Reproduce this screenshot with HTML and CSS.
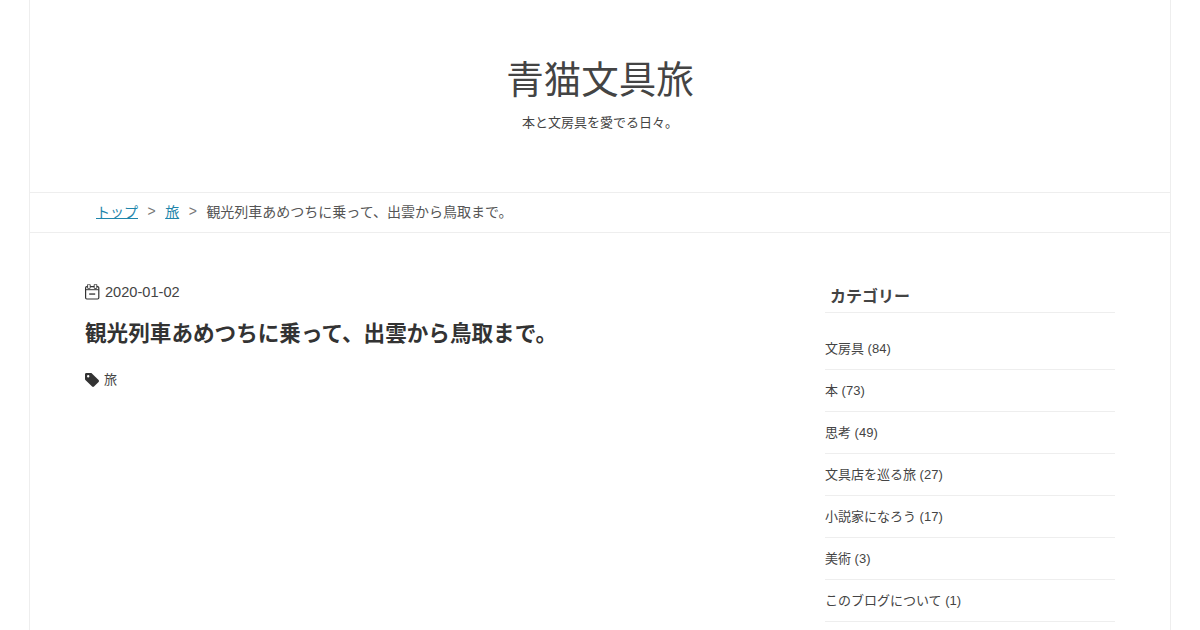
FILE: index.html
```html
<!DOCTYPE html>
<html lang="ja">
<head>
<meta charset="utf-8">
<title>青猫文具旅</title>
<link rel="stylesheet" href="styles.css">
</head>
<body>
<div class="site">
  <header class="site-header">
    <h1 class="site-title">青猫文具旅</h1>
    <p class="site-desc">本と文房具を愛でる日々。</p>
  </header>
  <nav class="crumbs">
    <a href="#">トップ</a><span class="sep">&gt;</span><a href="#">旅</a><span class="sep">&gt;</span><span>観光列車あめつちに乗って、出雲から鳥取まで。</span>
  </nav>
  <div class="content">
    <main class="main">
      <div class="date">
        <svg class="date-icon" width="15" height="16" viewBox="0 0 15 16" aria-hidden="true">
          <rect x="0.6" y="2.6" width="13.2" height="12.4" rx="1.2" fill="none" stroke="#333" stroke-width="1.2"/>
          <rect x="0.6" y="5.2" width="13.2" height="1" fill="#333"/>
          <rect x="2.6" y="0.2" width="2.6" height="4.4" rx="0.7" fill="#fff" stroke="#333" stroke-width="0.9"/>
          <rect x="9.2" y="0.2" width="2.6" height="4.4" rx="0.7" fill="#fff" stroke="#333" stroke-width="0.9"/>
          <rect x="4.2" y="9.4" width="6" height="1.3" fill="#333"/>
        </svg>
        <span>2020-01-02</span>
      </div>
      <h2 class="post-title">観光列車あめつちに乗って、出雲から鳥取まで。</h2>
      <div class="tags">
        <svg width="14" height="14" viewBox="0 0 14 14" aria-hidden="true">
          <path fill="#333" d="M0 1.3C0 .6.6 0 1.3 0h4.6c.4 0 .7.1 1 .4l6.7 6.7c.5.5.5 1.4 0 1.9l-4.6 4.6c-.5.5-1.4.5-1.9 0L.4 6.9C.1 6.6 0 6.3 0 5.9V1.3zM3.2 2a1.2 1.2 0 1 0 0 2.4 1.2 1.2 0 0 0 0-2.4z" fill-rule="evenodd"/>
        </svg>
        <span>旅</span>
      </div>
    </main>
    <aside class="side">
      <h3 class="side-title">カテゴリー</h3>
      <ul class="cats">
        <li>文房具 (84)</li>
        <li>本 (73)</li>
        <li>思考 (49)</li>
        <li>文具店を巡る旅 (27)</li>
        <li>小説家になろう (17)</li>
        <li>美術 (3)</li>
        <li>このブログについて (1)</li>
      </ul>
    </aside>
  </div>
</div>
</body>
</html>
```
FILE: styles.css
```css
html, body {
  margin: 0;
  height: 630px;
  overflow: hidden;
  background: #fff;
}
body {
  font-family: "Liberation Sans", "Noto Sans CJK JP", sans-serif;
  color: #444;
}
.site {
  box-sizing: border-box;
  width: 1142px;
  height: 630px;
  margin: 0 auto;
  border-left: 1px solid #eee;
  border-right: 1px solid #eee;
  background: #fff;
}
.site-header {
  box-sizing: border-box;
  height: 192px;
  padding-top: 55px;
  text-align: center;
}
.site-title {
  margin: 0;
  font-size: 37.5px;
  font-weight: 400;
  line-height: 50px;
}
.site-desc {
  margin: 8px 0 0;
  font-size: 13px;
  line-height: 20px;
}
.crumbs {
  box-sizing: border-box;
  height: 41px;
  padding: 0 0 4px 66px;
  display: flex;
  align-items: center;
  border-top: 1px solid #eee;
  border-bottom: 1px solid #eee;
  font-size: 14px;
  color: #555;
}
.crumbs a {
  color: #1e85ab;
}
.sep {
  margin: 0 9.5px;
  color: #777;
}
.content {
  display: flex;
  justify-content: space-between;
  padding: 47px 55px 0;
}
.main {
  width: 685px;
}
.date {
  display: flex;
  align-items: center;
  gap: 5px;
  height: 24px;
  font-size: 14.6px;
}
.post-title {
  margin: 15px 0 0;
  font-size: 21.6px;
  line-height: 30px;
  font-weight: 700;
  color: #333;
}
.tags {
  display: flex;
  align-items: center;
  gap: 5px;
  margin-top: 21px;
  font-size: 13px;
  line-height: 20px;
}
.side {
  width: 290px;
  margin-top: 4px;
}
.side-title {
  margin: 0;
  padding: 0 5px 2px;
  border-bottom: 1px solid #eee;
  font-size: 16px;
  line-height: 26px;
  font-weight: 700;
}
.cats {
  list-style: none;
  margin: 15px 0 0;
  padding: 0;
  font-size: 13px;
}
.cats li {
  box-sizing: border-box;
  height: 42px;
  line-height: 41px;
  border-bottom: 1px solid #eee;
}
```
